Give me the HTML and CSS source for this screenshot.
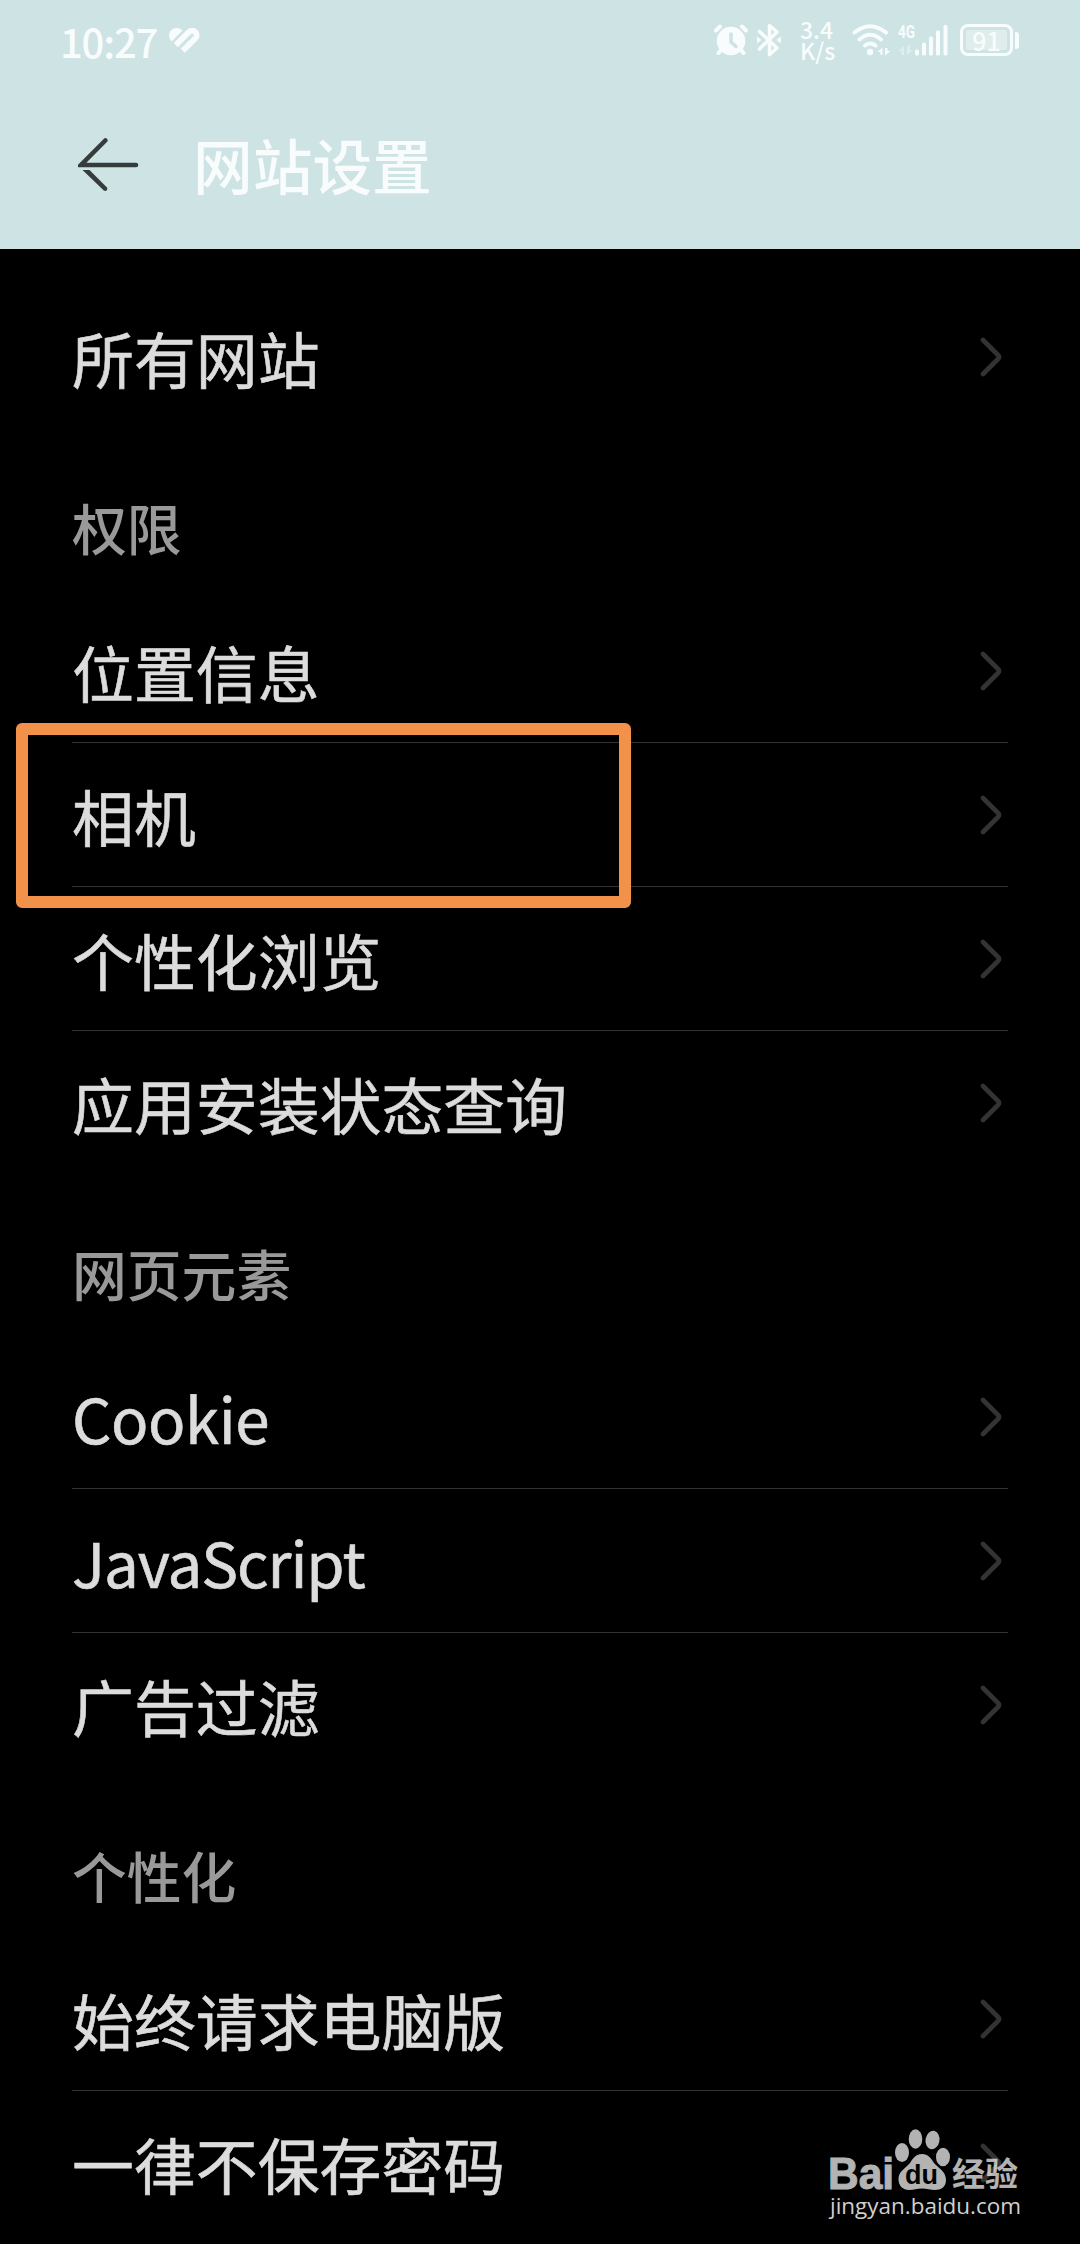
FILE: index.html
```html
<!DOCTYPE html>
<html lang="zh-CN">
<head>
    <meta charset="UTF-8">
    <meta name="viewport" content="width=device-width, initial-scale=1.0">
    <title>网站设置</title>
    <link rel="stylesheet" href="styles.css">
</head>
<body>
    <svg class="sprite" aria-hidden="true">
        <symbol id="chevron" viewBox="0 0 22 40">
            <path d="M3 3 L18 18 Q20 20 18 22 L3 37" fill="none" stroke="currentColor" stroke-width="4.6" stroke-linecap="round"/>
        </symbol>
    </svg>

    <header class="header">
        <div class="status-bar">
            <span class="time">10:27</span>
            <svg class="health" width="32" height="27" viewBox="0 0 32 27" fill="none" stroke="currentColor">
                <path d="M3.5 13.5 C-2 7 2.500 0 8.500 0 C11 0 13 .8 14.500 2.500 Z" fill="currentColor" stroke="none"/>
                <path d="M7.800 17.100 L20.800 4.100 A4.300 4.300 0 0 1 27.400 10.200 L14.800 22.800" stroke-width="5.800"/>
            </svg>

            <div class="status-icons">
                <svg class="alarm" width="34" height="32" viewBox="0 0 34 32" fill="none" stroke="currentColor" stroke-width="4" stroke-linecap="round">
                    <circle cx="17" cy="17" r="14.3" fill="currentColor" stroke="none"/>
                    <path d="M2 6.5 L6 2.5 M32 6.5 L28 2.5 M7 26 L4.5 29 M27 26 L29.5 29"/>
                    <path d="M17 10 V18 L22 22.5" stroke="#cee3e4" stroke-width="3.6"/>
                </svg>
                <svg class="bluetooth" width="24" height="34" viewBox="0 0 24 34" fill="none" stroke="currentColor" stroke-width="3.6" stroke-linejoin="round" stroke-linecap="round">
                    <path d="M2.5 8.5 L20 25 L12.5 31.5 V2.5 L20 9 L2.5 26"/>
                    <path d="M0 13.5 L4.5 17 L0 20.5 Z M24 13.5 L19.5 17 L24 20.5 Z" fill="currentColor" stroke="none"/>
                </svg>
                <div class="speed">
                    <span>3.4</span>
                    <span>K/s</span>
                </div>
                <svg class="wifi" width="40" height="32" viewBox="0 0 40 32" fill="none" stroke="currentColor" stroke-width="4" stroke-linecap="round">
                    <path d="M2.5 8.5 Q18 -4 34 8.5"/>
                    <path d="M7.5 15.5 Q18 6 29 15.5"/>
                    <path d="M13 21.5 Q18 17.5 23.5 21.5"/>
                    <circle cx="18" cy="28" r="3.2" fill="currentColor" stroke="none"/>
                    <path d="M30.5 31 V23.5 L25.5 28 H28.5 V31 Z M33 24 V31.5 L38.5 27 H35.5 V24 Z" fill="currentColor" stroke="none"/>
                </svg>
                <svg class="signal" width="50" height="32" viewBox="0 0 50 32" fill="currentColor">
                    <text class="network" x="0" y="14" textLength="17" lengthAdjust="spacingAndGlyphs">4G</text>
                    <path d="M6 31 V21.5 L.5 27 H3.5 V31 Z M9 21.5 V31 L15 26 H12 V21.5 Z" opacity=".4"/>
                    <rect x="17" y="25.5" width="4" height="6" rx="1.5"/>
                    <rect x="24" y="18.5" width="4" height="13" rx="1.5"/>
                    <rect x="31" y="12.5" width="4" height="19" rx="1.5"/>
                    <rect x="38" y="6.5" width="4" height="25" rx="1.5"/>
                    <rect x="45.5" y="1" width="4" height="30.5" rx="1.5"/>
                </svg>
                <div class="battery"><span>91</span></div>
                <i class="battery-cap"></i>
            </div>
        </div>

        <div class="title-bar">
            <svg class="back" width="61" height="56" viewBox="0 0 61 56" fill="none" stroke="currentColor" stroke-width="4.6" stroke-linecap="round">
                <path d="M27.3 3.5 L3 28 H58"/>
                <path d="M4.5 33 H11.5 L29 50.5 Q30 53 27.5 54 L25.8 53.6 Z" fill="currentColor" stroke="none"/>
            </svg>
            <h1>网站设置</h1>
        </div>
    </header>

    <main class="settings">
        <ul class="group">
            <li><span>所有网站</span><svg class="arrow"><use href="#chevron"/></svg></li>
        </ul>

        <h2>权限</h2>
        <ul class="group">
            <li><span>位置信息</span><svg class="arrow"><use href="#chevron"/></svg></li>
            <li class="marked"><span>相机</span><svg class="arrow"><use href="#chevron"/></svg></li>
            <li><span>个性化浏览</span><svg class="arrow"><use href="#chevron"/></svg></li>
            <li><span>应用安装状态查询</span><svg class="arrow"><use href="#chevron"/></svg></li>
        </ul>

        <h2>网页元素</h2>
        <ul class="group">
            <li><span class="cookie">Cookie</span><svg class="arrow"><use href="#chevron"/></svg></li>
            <li><span class="script">JavaScript</span><svg class="arrow"><use href="#chevron"/></svg></li>
            <li><span>广告过滤</span><svg class="arrow"><use href="#chevron"/></svg></li>
        </ul>

        <h2>个性化</h2>
        <ul class="group">
            <li><span>始终请求电脑版</span><svg class="arrow"><use href="#chevron"/></svg></li>
            <li><span>一律不保存密码</span><svg class="arrow"><use href="#chevron"/></svg></li>
        </ul>
    </main>

    <svg class="watermark" width="200" height="100" viewBox="0 0 200 100" fill="#fff">
        <g opacity=".7">
            <text class="wm-bai" x="0" y="63" textLength="66" lengthAdjust="spacingAndGlyphs">Bai</text>
            <ellipse cx="74" cy="26.5" rx="7" ry="9.5"/>
            <ellipse cx="87.5" cy="13" rx="6.8" ry="9.7"/>
            <ellipse cx="104.5" cy="14" rx="7" ry="9.3" transform="rotate(10 104.5 14)"/>
            <ellipse cx="115" cy="31" rx="7" ry="9.3"/>
            <path d="M94 28 C100 28 103 32 106 37 C110 42 118 45 118 54 C118 61 113 64 107 64 C102 64 99 62.5 94 62.5 C89 62.5 86 64 81 64 C75 64 70.5 60 70.5 53 C70.5 45 78 42 82 37 C85 32 88 28 94 28 Z"/>
            <text class="wm-cn" x="124" y="60" textLength="66" lengthAdjust="spacingAndGlyphs">经验</text>
        </g>
        <text class="wm-du" x="77" y="58" textLength="33" lengthAdjust="spacingAndGlyphs">du</text>
        <text class="wm-url" x="2" y="88" textLength="191" lengthAdjust="spacingAndGlyphs">jingyan.baidu.com</text>
    </svg>
</body>
</html>
```

FILE: styles.css
```css
:root {
    --header-bg: #cee3e4;
    --header-text: #f8fcfc;
    --text: #dcdcdc;
    --text-muted: #999;
    --line: #333;
    --mark: #f2924a;
}

*,
*::after {
    margin: 0;
    padding: 0;
    box-sizing: border-box;
}

body {
    position: relative;
    height: 2244px;
    overflow: hidden;
    background: #000;
    color: var(--text);
    font-family: "Noto Sans CJK SC", sans-serif;
}

.sprite {
    position: absolute;
    width: 0;
    height: 0;
}

.header {
    height: 249px;
    background: var(--header-bg);
    color: var(--header-text);
}

.status-bar {
    display: flex;
    align-items: flex-start;
    height: 82px;
    padding: 24px 61px 0 60px;
}

.time {
    width: 108px;
    margin-top: -3px;
    font-size: 40px;
    line-height: 40px;
    font-weight: 500;
    letter-spacing: -1.2px;
}

.health {
    margin-top: 4px;
}

.status-icons {
    display: flex;
    align-items: flex-start;
    margin-left: auto;
}

.alarm {
    margin-right: 9px;
}

.bluetooth {
    margin: -1px 19px 0 0;
}

.speed {
    display: flex;
    flex-direction: column;
    width: 52px;
    margin-top: -5px;
    font-size: 23px;
    line-height: 21px;
    font-weight: 500;
}

.wifi {
    margin-right: 6px;
}

.signal {
    margin-right: 12px;
    overflow: visible;
}

.network {
    font-family: Roboto, sans-serif;
    font-size: 18px;
    font-weight: 700;
}

.battery {
    display: flex;
    align-items: center;
    justify-content: center;
    width: 53px;
    height: 32px;
    padding: 3px;
    border: 3px solid currentColor;
    border-radius: 8px;
    font-size: 25px;
    line-height: 20px;
    font-weight: 500;
}

.battery span {
    width: 100%;
    height: 100%;
    border-radius: 2px;
    background: rgba(255, 255, 255, 0.35);
    text-align: center;
}

.battery-cap {
    width: 4px;
    height: 17px;
    margin: 8px 0 0 2px;
    border-radius: 1px 3px 3px 1px;
    background: currentColor;
}

.title-bar {
    display: flex;
    align-items: center;
    height: 167px;
    padding: 0 78px 2px;
}

.back {
    margin-right: 54px;
    color: #353d3c;
}

.title-bar h1 {
    margin-top: -2px;
    font-size: 59.7px;
    line-height: 80px;
    font-weight: 500;
}

.settings {
    padding: 36px 72px 0;
}

.settings h2 {
    height: 170px;
    padding-top: 57px;
    color: var(--text-muted);
    font-size: 54.8px;
    line-height: 80px;
    font-weight: 500;
}

.group {
    list-style: none;
}

.group li {
    position: relative;
    display: flex;
    align-items: center;
    justify-content: space-between;
    height: 144px;
    border-bottom: 1px solid var(--line);
    font-size: 61.9px;
    line-height: 80px;
    -webkit-text-stroke: 0.6px currentColor;
}

.group li:last-child {
    border-bottom-color: transparent;
}

.cookie {
    letter-spacing: -0.5px;
}

.script {
    letter-spacing: -1.1px;
}

.arrow {
    width: 22px;
    height: 40px;
    margin-right: 6px;
    color: var(--line);
}

/* highlight frame around the camera row */
.marked::after {
    content: "";
    position: absolute;
    left: -56px;
    top: -20px;
    width: 615px;
    height: 185px;
    border: 12px solid var(--mark);
    border-radius: 6px;
}

.watermark {
    position: absolute;
    left: 828px;
    top: 2126px;
}

.wm-bai {
    font-family: "Liberation Sans", sans-serif;
    font-size: 45px;
    font-weight: 700;
    stroke: #fff;
    stroke-width: 1px;
}

.wm-cn {
    font-size: 33px;
    font-weight: 700;
}

.wm-du {
    fill: #000;
    font-family: "Liberation Sans", sans-serif;
    font-size: 27px;
    font-weight: 700;
}

.wm-url {
    fill: #d0d0d0;
    font-family: "Open Sans", sans-serif;
    font-size: 22px;
}
```
